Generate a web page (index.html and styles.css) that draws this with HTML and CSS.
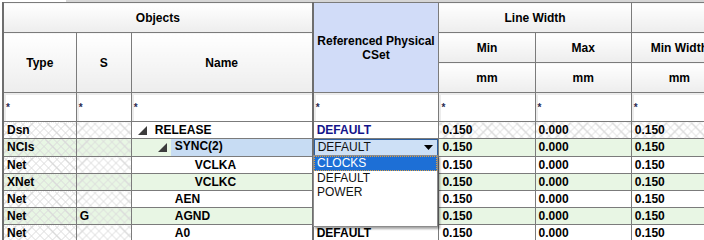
FILE: index.html
```html
<!DOCTYPE html>
<html>
<head>
    <title>Constraint Manager</title>
    <link rel="stylesheet" href="styles.css">
</head>
<body>
    <div class="top-strip"></div>
    <div class="sheet">
        <table class="grid">
            <colgroup>
                <col class="c-type">
                <col class="c-s">
                <col class="c-name">
                <col class="c-ref">
                <col class="c-num">
                <col class="c-num">
                <col class="c-num">
            </colgroup>
            <tr class="head-row">
                <th colspan="3">Objects</th>
                <th rowspan="3" class="ref-head">Referenced Physical<br>CSet</th>
                <th colspan="2">Line Width</th>
                <th></th>
            </tr>
            <tr class="head-row">
                <th rowspan="2">Type</th>
                <th rowspan="2">S</th>
                <th rowspan="2">Name</th>
                <th>Min</th>
                <th>Max</th>
                <th>Min Width</th>
            </tr>
            <tr class="head-row">
                <th>mm</th>
                <th>mm</th>
                <th>mm</th>
            </tr>
            <tr class="filter-row">
                <td>*</td>
                <td>*</td>
                <td>*</td>
                <td class="ref-cell">*</td>
                <td>*</td>
                <td>*</td>
                <td>*</td>
            </tr>
            <tr class="data-row">
                <td class="locked">Dsn</td>
                <td class="locked"></td>
                <td><span class="tree"><svg width="9" height="9" viewBox="0 0 9 9"><polygon points="9,0 9,9 0,9" fill="#3c3c3c"/></svg></span>RELEASE</td>
                <td class="ref-cell cset">DEFAULT</td>
                <td class="locked">0.150</td>
                <td class="locked">0.000</td>
                <td class="locked">0.150</td>
            </tr>
            <tr class="data-row alt">
                <td class="locked">NCIs</td>
                <td class="locked"></td>
                <td class="name-sel"><span class="indent-1"></span><span class="tree"><svg width="9" height="9" viewBox="0 0 9 9"><polygon points="9,0 9,9 0,9" fill="#3c3c3c"/></svg></span><span class="selected">SYNC(2)</span></td>
                <td class="ref-cell combo-cell">
                    <div class="combo">
                        <span>DEFAULT</span>
                        <svg width="9" height="5" viewBox="0 0 9 5"><polygon points="0,0 9,0 4.5,5" fill="#000"/></svg>
                    </div>
                </td>
                <td>0.150</td>
                <td>0.000</td>
                <td>0.150</td>
            </tr>
            <tr class="data-row">
                <td class="locked">Net</td>
                <td class="locked"></td>
                <td class="lvl-2">VCLKA</td>
                <td class="ref-cell"></td>
                <td>0.150</td>
                <td>0.000</td>
                <td>0.150</td>
            </tr>
            <tr class="data-row alt">
                <td class="locked">XNet</td>
                <td class="locked"></td>
                <td class="lvl-2">VCLKC</td>
                <td class="ref-cell"></td>
                <td>0.150</td>
                <td>0.000</td>
                <td>0.150</td>
            </tr>
            <tr class="data-row">
                <td class="locked">Net</td>
                <td class="locked"></td>
                <td class="lvl-1">AEN</td>
                <td class="ref-cell"></td>
                <td>0.150</td>
                <td>0.000</td>
                <td>0.150</td>
            </tr>
            <tr class="data-row alt">
                <td class="locked">Net</td>
                <td class="locked">G</td>
                <td class="lvl-1">AGND</td>
                <td class="ref-cell"></td>
                <td>0.150</td>
                <td>0.000</td>
                <td>0.150</td>
            </tr>
            <tr class="data-row">
                <td class="locked">Net</td>
                <td class="locked"></td>
                <td class="lvl-1">A0</td>
                <td class="ref-cell">DEFAULT</td>
                <td>0.150</td>
                <td>0.000</td>
                <td>0.150</td>
            </tr>
        </table>

        <div class="dropdown">
            <div class="option active">CLOCKS</div>
            <div class="option">DEFAULT</div>
            <div class="option">POWER</div>
        </div>
    </div>
</body>
</html>
```

FILE: styles.css
```css
body {
    margin: 0;
    width: 704px;
    height: 240px;
    overflow: hidden;
    background-color: white;
    font-family: "Liberation Sans", Arial, sans-serif;
}
.top-strip {
    height: 2px;
    background: linear-gradient(to right, white 66px, #d6d6d6 66px);
}
.sheet {
    position: relative;
    padding-left: 2px;
}
.grid {
    border-collapse: collapse;
    table-layout: fixed;
    width: 726px;
    font-size: 12px;
    font-weight: bold;
    color: #000;
    border-left: 2px solid #6e6e6e;
}
.c-type { width: 73px; }
.c-s { width: 55px; }
.c-name { width: 181px; }
.c-ref { width: 126px; }
.c-num { width: 96px; }

.grid th,
.grid td {
    border: 1px solid #7b7b7b;
    padding: 0 3px;
    white-space: nowrap;
    overflow: hidden;
}
.grid th {
    background: linear-gradient(white, #ededed);
    text-align: center;
    font-weight: bold;
}
.head-row {
    height: 30px;
}
.grid th.ref-head {
    background: #d1dcf8;
    line-height: 14px;
    border-left: 2px solid #6e6e6e;
}
.ref-cell {
    border-left: 2px solid #6e6e6e !important;
}
.filter-row {
    height: 29px;
}
.filter-row td {
    font-size: 10px;
    color: #2a2a50;
    box-shadow: inset 2px 2px 0 #ececec;
    vertical-align: middle;
    padding-left: 2px;
}
.data-row {
    height: 17px;
}
.data-row td {
    height: 15px;
    line-height: 15px;
    background-color: white;
}
.data-row.alt td {
    background-color: #e8f6e4;
}
.grid td.locked {
    background-image:
        repeating-linear-gradient(45deg, transparent 0 5px, #dadada 5px 6px),
        repeating-linear-gradient(-45deg, transparent 0 5px, #dadada 5px 6px);
}
.tree {
    display: inline-block;
    width: 9px;
    margin: 0 8px 0 3px;
    vertical-align: -1px;
}
.tree svg {
    display: block;
}
.indent-1 {
    display: inline-block;
    width: 20px;
}
.name-sel {
    position: relative;
}
.selected {
    position: absolute;
    left: 39px;
    right: 0;
    top: 0;
    bottom: 0;
    padding-left: 4px;
    background-color: #c7dcf3;
}
.lvl-1 {
    padding-left: 43px !important;
}
.lvl-2 {
    padding-left: 63px !important;
}
.cset {
    color: #14148a;
}
.combo-cell {
    padding: 0 !important;
}
.combo {
    display: flex;
    justify-content: space-between;
    align-items: center;
    height: 15px;
    padding: 0 4px 0 3px;
    background-color: #cde0f6;
    border: 1px solid #2d5f9e;
    font-weight: normal;
    color: #111;
}
.dropdown {
    position: absolute;
    left: 313px;
    top: 153px;
    width: 123px;
    height: 70px;
    background-color: white;
    border: 1px solid #8c8c8c;
    box-shadow: 2px 2px 2px rgba(0, 0, 0, 0.35);
    font-size: 12px;
    color: #111;
}
.option {
    height: 14px;
    line-height: 14px;
    padding-left: 3px;
}
.option.active {
    height: 13px;
    background-color: #1d6fd6;
    color: white;
    border: 1px dotted #e0a040;
    padding-left: 2px;
    line-height: 13px;
}
```
